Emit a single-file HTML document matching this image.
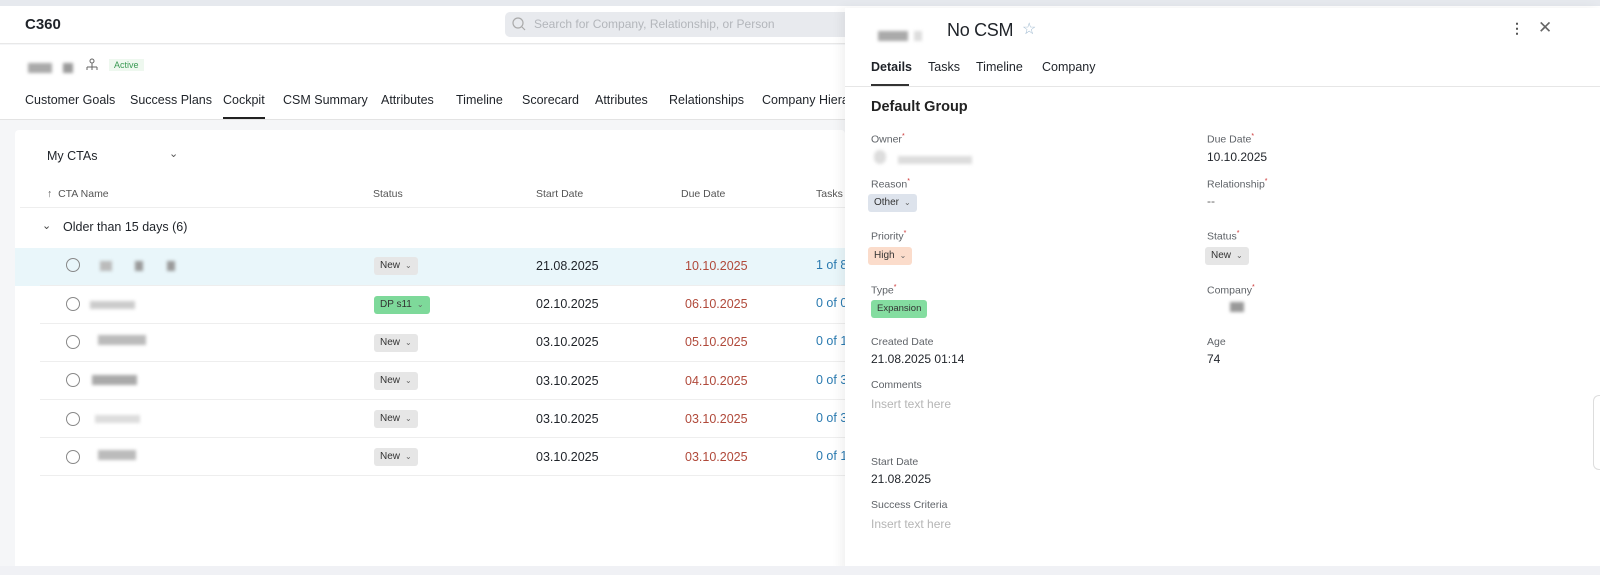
<!DOCTYPE html>
<html><head><style>
*{box-sizing:border-box;margin:0;padding:0}
body{width:1600px;height:575px;overflow:hidden;background:#f5f6f8;font-family:"Liberation Sans",sans-serif;color:#1f2329;position:relative;font-size:12px}
.a{position:absolute;white-space:nowrap}
.blur{position:absolute;background:#9a9a9a;filter:blur(1.5px)}
.pill{position:absolute;height:18px;border-radius:3px;font-size:10px;line-height:18px;padding:0 6px;color:#333}
.pill i{font-style:normal;font-size:8px;margin-left:5px;color:#666}
.lab{position:absolute;font-size:10.5px;color:#5f6368}
.lab sup{color:#c33;font-size:7px}
.val{position:absolute;font-size:12px;color:#1f2329}
</style></head><body>
<div class="a" style="left:0;top:0;width:1600px;height:6px;background:#e6e9ee"></div>
<div class="a" style="left:0;top:6px;width:1600px;height:38px;background:#fff;border-bottom:1px solid #e8e8e8"></div>
<div class="a" style="left:25px;top:16px;font-size:15px;font-weight:bold">C360</div>
<div class="a" style="left:505px;top:12px;width:345px;height:25px;background:#e8eaee;border-radius:5px"></div>
<svg class="a" style="left:511px;top:16px" width="16" height="16"><circle cx="7" cy="7" r="5" fill="none" stroke="#aaa" stroke-width="1.2"/><path d="M11 11l3 3" stroke="#aaa" stroke-width="1.2"/></svg>
<div class="a" style="left:534px;top:17px;font-size:12px;color:#b3b6bb">Search for Company, Relationship, or Person</div>
<div class="a" style="left:0;top:45px;width:845px;height:75px;background:#fff;border-bottom:1px solid #e3e3e3"></div>
<div class="blur" style="left:28px;top:63px;width:24px;height:10px;background:#aaa"></div>
<div class="blur" style="left:63px;top:63px;width:10px;height:10px"></div>
<svg class="a" style="left:85px;top:58px" width="14" height="16"><circle cx="7" cy="3" r="2" fill="none" stroke="#666"/><path d="M7 5v4M2 9h10M2 9v3M7 9v3M12 9v3" stroke="#666" fill="none"/></svg>
<div class="a" style="left:109px;top:59px;font-size:9px;color:#3a9a54;background:#eef8ef;padding:1px 5px">Active</div>
<div class="a" style="top:93px;left:25px;font-size:12.5px;word-spacing:0">
<span class="a" style="left:0">Customer Goals</span><span class="a" style="left:105px">Success Plans</span><span class="a" style="left:198px">Cockpit</span><span class="a" style="left:258px">CSM Summary</span><span class="a" style="left:356px">Attributes</span><span class="a" style="left:431px">Timeline</span><span class="a" style="left:497px">Scorecard</span><span class="a" style="left:570px">Attributes</span><span class="a" style="left:644px">Relationships</span><span class="a" style="left:737px">Company Hiera</span></div>
<div class="a" style="left:223px;top:117px;width:42px;height:2px;background:#222"></div>
<div class="a" style="left:15px;top:130px;width:830px;height:440px;background:#fff;border-radius:4px"></div>
<div class="a" style="left:47px;top:149px;font-size:12.5px">My CTAs</div>
<div class="a" style="left:169px;top:147px;font-size:11px;color:#555">⌄</div>
<div class="a" style="left:47px;top:188px;font-size:10.5px;color:#555">↑&nbsp; CTA Name</div>
<div class="a" style="left:373px;top:188px;font-size:10.5px;color:#555">Status</div>
<div class="a" style="left:536px;top:188px;font-size:10.5px;color:#555">Start Date</div>
<div class="a" style="left:681px;top:188px;font-size:10.5px;color:#555">Due Date</div>
<div class="a" style="left:816px;top:188px;font-size:10.5px;color:#555">Tasks</div>
<div class="a" style="left:20px;top:207px;width:825px;height:1px;background:#eee"></div>
<div class="a" style="left:42px;top:219px;font-size:11px;color:#444">⌄</div>
<div class="a" style="left:63px;top:220px;font-size:12.5px">Older than 15 days (6)</div>
<div class="a" style="left:15px;top:248px;width:830px;height:38px;background:#e9f6fa"></div>
<div class="a" style="left:40px;top:323px;width:805px;height:1px;background:#eee"></div>
<div class="a" style="left:40px;top:361px;width:805px;height:1px;background:#eee"></div>
<div class="a" style="left:40px;top:399px;width:805px;height:1px;background:#eee"></div>
<div class="a" style="left:40px;top:437px;width:805px;height:1px;background:#eee"></div>
<div class="a" style="left:40px;top:475px;width:805px;height:1px;background:#eee"></div>
<div class="a" style="left:40px;top:285px;width:805px;height:1px;background:#eee"></div>

<div class="a" style="left:66px;top:258px;width:14px;height:14px;border:1px solid #888;border-radius:50%"></div>
<div class="a" style="left:66px;top:297px;width:14px;height:14px;border:1px solid #888;border-radius:50%"></div>
<div class="a" style="left:66px;top:335px;width:14px;height:14px;border:1px solid #888;border-radius:50%"></div>
<div class="a" style="left:66px;top:373px;width:14px;height:14px;border:1px solid #888;border-radius:50%"></div>
<div class="a" style="left:66px;top:412px;width:14px;height:14px;border:1px solid #888;border-radius:50%"></div>
<div class="a" style="left:66px;top:450px;width:14px;height:14px;border:1px solid #888;border-radius:50%"></div>

<div class="blur" style="left:100px;top:261px;width:12px;height:10px;background:#bbb"></div>
<div class="blur" style="left:135px;top:261px;width:8px;height:10px"></div>
<div class="blur" style="left:167px;top:261px;width:8px;height:10px"></div>
<div class="blur" style="left:90px;top:301px;width:45px;height:8px;background:#ccc"></div>
<div class="blur" style="left:98px;top:335px;width:48px;height:10px;background:#bbb"></div>
<div class="blur" style="left:92px;top:375px;width:45px;height:10px;background:#aaa"></div>
<div class="blur" style="left:95px;top:415px;width:45px;height:8px;background:#ddd"></div>
<div class="blur" style="left:98px;top:450px;width:38px;height:10px;background:#bbb"></div>

<div class="pill" style="left:374px;top:257px;background:#e6e6e6">New<i>⌄</i></div>
<div class="pill" style="left:374px;top:296px;background:#7ed99a">DP s11<i>⌄</i></div>
<div class="pill" style="left:374px;top:334px;background:#e6e6e6">New<i>⌄</i></div>
<div class="pill" style="left:374px;top:372px;background:#e6e6e6">New<i>⌄</i></div>
<div class="pill" style="left:374px;top:410px;background:#e6e6e6">New<i>⌄</i></div>
<div class="pill" style="left:374px;top:448px;background:#e6e6e6">New<i>⌄</i></div>

<div class="a" style="left:536px;top:259px;font-size:12.5px">21.08.2025</div>
<div class="a" style="left:536px;top:297px;font-size:12.5px">02.10.2025</div>
<div class="a" style="left:536px;top:335px;font-size:12.5px">03.10.2025</div>
<div class="a" style="left:536px;top:374px;font-size:12.5px">03.10.2025</div>
<div class="a" style="left:536px;top:412px;font-size:12.5px">03.10.2025</div>
<div class="a" style="left:536px;top:450px;font-size:12.5px">03.10.2025</div>
<div class="a" style="left:685px;top:259px;font-size:12.5px;color:#b0493a">10.10.2025</div>
<div class="a" style="left:685px;top:297px;font-size:12.5px;color:#b0493a">06.10.2025</div>
<div class="a" style="left:685px;top:335px;font-size:12.5px;color:#b0493a">05.10.2025</div>
<div class="a" style="left:685px;top:374px;font-size:12.5px;color:#b0493a">04.10.2025</div>
<div class="a" style="left:685px;top:412px;font-size:12.5px;color:#b0493a">03.10.2025</div>
<div class="a" style="left:685px;top:450px;font-size:12.5px;color:#b0493a">03.10.2025</div>
<div class="a" style="left:816px;top:258px;font-size:12.5px;color:#2a7ab0">1 of 8</div>
<div class="a" style="left:816px;top:296px;font-size:12.5px;color:#2a7ab0">0 of 0</div>
<div class="a" style="left:816px;top:334px;font-size:12.5px;color:#2a7ab0">0 of 1</div>
<div class="a" style="left:816px;top:373px;font-size:12.5px;color:#2a7ab0">0 of 3</div>
<div class="a" style="left:816px;top:411px;font-size:12.5px;color:#2a7ab0">0 of 3</div>
<div class="a" style="left:816px;top:449px;font-size:12.5px;color:#2a7ab0">0 of 1</div>

<div class="a" style="left:845px;top:8px;width:755px;height:567px;background:#fff;box-shadow:-4px 0 10px rgba(0,0,0,0.06)"></div>
<div class="blur" style="left:878px;top:31px;width:30px;height:10px;background:#aaa"></div>
<div class="blur" style="left:914px;top:31px;width:8px;height:10px;background:#ddd"></div>
<div class="a" style="left:947px;top:20px;font-size:18px;letter-spacing:-0.3px">No CSM</div>
<div class="a" style="left:1022px;top:19px;font-size:16px;color:#9db8cf">☆</div>
<div class="a" style="left:1510px;top:20px;font-size:14px;color:#555;font-weight:bold">⋮</div>
<div class="a" style="left:1538px;top:18px;font-size:17px;color:#666">✕</div>
<div class="a" style="left:871px;top:60px;font-size:12.5px;font-weight:bold">Details</div>
<div class="a" style="left:928px;top:60px;font-size:12.5px">Tasks</div>
<div class="a" style="left:976px;top:60px;font-size:12.5px">Timeline</div>
<div class="a" style="left:1042px;top:60px;font-size:12.5px">Company</div>
<div class="a" style="left:871px;top:84px;width:38px;height:2px;background:#333"></div>
<div class="a" style="left:845px;top:86px;width:755px;height:1px;background:#e6e6e6"></div>
<div class="a" style="left:871px;top:99px;font-size:14.5px;font-weight:bold;color:#222">Default Group</div>

<div class="lab" style="left:871px;top:133px">Owner<sup>*</sup></div>
<div class="blur" style="left:874px;top:150px;width:12px;height:14px;border-radius:6px;background:#ddd"></div>
<div class="blur" style="left:898px;top:156px;width:74px;height:8px;background:#ddd"></div>
<div class="lab" style="left:871px;top:178px">Reason<sup>*</sup></div>
<div class="pill" style="left:868px;top:194px;background:#dde3ec">Other<i>⌄</i></div>
<div class="lab" style="left:871px;top:230px">Priority<sup>*</sup></div>
<div class="pill" style="left:868px;top:247px;background:#fbdccb">High<i>⌄</i></div>
<div class="lab" style="left:871px;top:284px">Type<sup>*</sup></div>
<div class="pill" style="left:871px;top:300px;background:#84dda0;font-size:9.5px">Expansion</div>
<div class="lab" style="left:871px;top:336px">Created Date</div>
<div class="val" style="left:871px;top:352px">21.08.2025 01:14</div>
<div class="lab" style="left:871px;top:379px">Comments</div>
<div class="a" style="left:871px;top:397px;font-size:12px;color:#b5b5b5">Insert text here</div>
<div class="lab" style="left:871px;top:456px">Start Date</div>
<div class="val" style="left:871px;top:472px">21.08.2025</div>
<div class="lab" style="left:871px;top:499px">Success Criteria</div>
<div class="a" style="left:871px;top:517px;font-size:12px;color:#b5b5b5">Insert text here</div>

<div class="lab" style="left:1207px;top:133px">Due Date<sup>*</sup></div>
<div class="val" style="left:1207px;top:150px">10.10.2025</div>
<div class="lab" style="left:1207px;top:178px">Relationship<sup>*</sup></div>
<div class="val" style="left:1207px;top:194px;color:#666">--</div>
<div class="lab" style="left:1207px;top:230px">Status<sup>*</sup></div>
<div class="pill" style="left:1205px;top:247px;background:#e6e6e6">New<i>⌄</i></div>
<div class="lab" style="left:1207px;top:284px">Company<sup>*</sup></div>
<div class="blur" style="left:1230px;top:302px;width:14px;height:10px;background:#999"></div>
<div class="lab" style="left:1207px;top:336px">Age</div>
<div class="val" style="left:1207px;top:352px">74</div>
<div class="a" style="left:1593px;top:395px;width:7px;height:75px;border:1px solid #ddd;border-right:none;border-radius:6px 0 0 6px"></div>
<div class="a" style="left:0;top:566px;width:1600px;height:9px;background:#f0f1f5"></div>
</body></html>
